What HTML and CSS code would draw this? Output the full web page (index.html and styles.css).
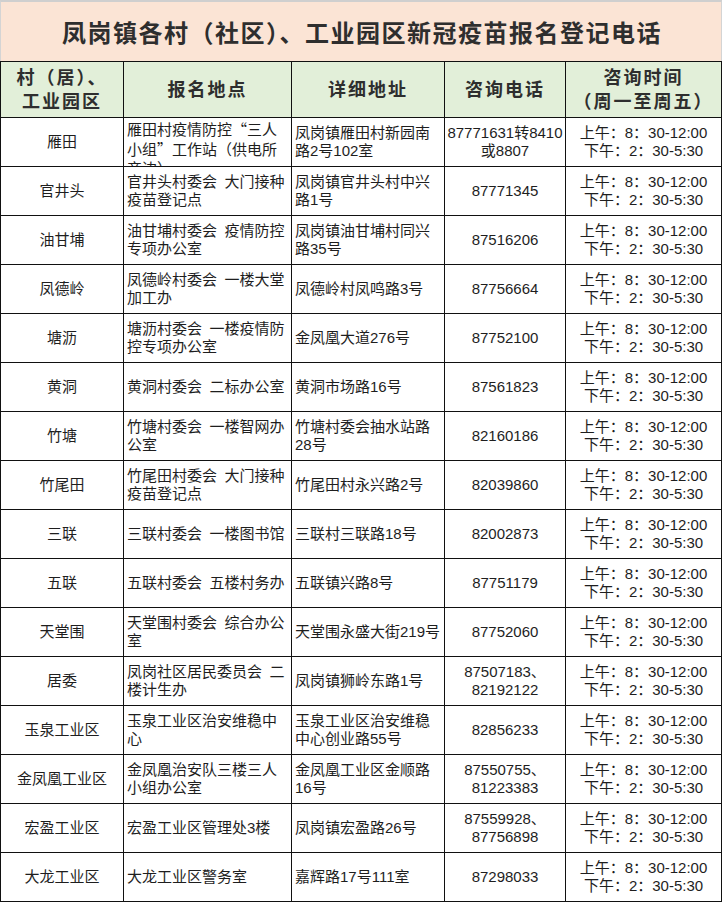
FILE: index.html
```html
<!DOCTYPE html>
<html lang="zh-CN">
<head>
<meta charset="utf-8">
<title>凤岗镇各村（社区）、工业园区新冠疫苗报名登记电话</title>
<link rel="stylesheet" href="styles.css">
</head>
<body>
<div class="sheet">
  <div class="title">凤岗镇各村（社区）、工业园区新冠疫苗报名登记电话</div>
  <div class="grid">
    <div class="hd">村（居）、<br>工业园区</div>
    <div class="hd">报名地点</div>
    <div class="hd">详细地址</div>
    <div class="hd">咨询电话</div>
    <div class="hd">咨询时间<br>（周一至周五）</div>

    <div class="c name">雁田</div>
    <div class="c left top"><div class="txt">雁田村疫情防控<span class="q">“</span>三人<br>小组<span class="q">”</span>工作站（供电所<br>旁边）</div></div>
    <div class="c left">凤岗镇雁田村新园南<br>路2号102室</div>
    <div class="c mid">87771631转8410<br>或8807</div>
    <div class="c mid">上午：8：30-12:00<br>下午：2：30-5:30</div>

    <div class="c name">官井头</div>
    <div class="c left">官井头村委会&ensp;大门接种<br>疫苗登记点</div>
    <div class="c left">凤岗镇官井头村中兴<br>路1号</div>
    <div class="c mid">87771345</div>
    <div class="c mid">上午：8：30-12:00<br>下午：2：30-5:30</div>

    <div class="c name">油甘埔</div>
    <div class="c left">油甘埔村委会&ensp;疫情防控<br>专项办公室</div>
    <div class="c left">凤岗镇油甘埔村同兴<br>路35号</div>
    <div class="c mid">87516206</div>
    <div class="c mid">上午：8：30-12:00<br>下午：2：30-5:30</div>

    <div class="c name">凤德岭</div>
    <div class="c left">凤德岭村委会&ensp;一楼大堂<br>加工办</div>
    <div class="c left">凤德岭村凤鸣路3号</div>
    <div class="c mid">87756664</div>
    <div class="c mid">上午：8：30-12:00<br>下午：2：30-5:30</div>

    <div class="c name">塘沥</div>
    <div class="c left">塘沥村委会&ensp;一楼疫情防<br>控专项办公室</div>
    <div class="c left">金凤凰大道276号</div>
    <div class="c mid">87752100</div>
    <div class="c mid">上午：8：30-12:00<br>下午：2：30-5:30</div>

    <div class="c name">黄洞</div>
    <div class="c left">黄洞村委会&ensp;二标办公室</div>
    <div class="c left">黄洞市场路16号</div>
    <div class="c mid">87561823</div>
    <div class="c mid">上午：8：30-12:00<br>下午：2：30-5:30</div>

    <div class="c name">竹塘</div>
    <div class="c left">竹塘村委会&ensp;一楼智网办<br>公室</div>
    <div class="c left">竹塘村委会抽水站路<br>28号</div>
    <div class="c mid">82160186</div>
    <div class="c mid">上午：8：30-12:00<br>下午：2：30-5:30</div>

    <div class="c name">竹尾田</div>
    <div class="c left">竹尾田村委会&ensp;大门接种<br>疫苗登记点</div>
    <div class="c left">竹尾田村永兴路2号</div>
    <div class="c mid">82039860</div>
    <div class="c mid">上午：8：30-12:00<br>下午：2：30-5:30</div>

    <div class="c name">三联</div>
    <div class="c left">三联村委会&ensp;一楼图书馆</div>
    <div class="c left">三联村三联路18号</div>
    <div class="c mid">82002873</div>
    <div class="c mid">上午：8：30-12:00<br>下午：2：30-5:30</div>

    <div class="c name">五联</div>
    <div class="c left">五联村委会&ensp;五楼村务办</div>
    <div class="c left">五联镇兴路8号</div>
    <div class="c mid">87751179</div>
    <div class="c mid">上午：8：30-12:00<br>下午：2：30-5:30</div>

    <div class="c name">天堂围</div>
    <div class="c left">天堂围村委会&ensp;综合办公<br>室</div>
    <div class="c left">天堂围永盛大街219号</div>
    <div class="c mid">87752060</div>
    <div class="c mid">上午：8：30-12:00<br>下午：2：30-5:30</div>

    <div class="c name">居委</div>
    <div class="c left">凤岗社区居民委员会&ensp;二<br>楼计生办</div>
    <div class="c left">凤岗镇狮岭东路1号</div>
    <div class="c mid">87507183、<br>82192122</div>
    <div class="c mid">上午：8：30-12:00<br>下午：2：30-5:30</div>

    <div class="c name">玉泉工业区</div>
    <div class="c left">玉泉工业区治安维稳中<br>心</div>
    <div class="c left">玉泉工业区治安维稳<br>中心创业路55号</div>
    <div class="c mid">82856233</div>
    <div class="c mid">上午：8：30-12:00<br>下午：2：30-5:30</div>

    <div class="c name">金凤凰工业区</div>
    <div class="c left">金凤凰治安队三楼三人<br>小组办公室</div>
    <div class="c left">金凤凰工业区金顺路<br>16号</div>
    <div class="c mid">87550755、<br>81223383</div>
    <div class="c mid">上午：8：30-12:00<br>下午：2：30-5:30</div>

    <div class="c name">宏盈工业区</div>
    <div class="c left">宏盈工业区管理处3楼</div>
    <div class="c left">凤岗镇宏盈路26号</div>
    <div class="c mid">87559928、<br>87756898</div>
    <div class="c mid">上午：8：30-12:00<br>下午：2：30-5:30</div>

    <div class="c name">大龙工业区</div>
    <div class="c left">大龙工业区警务室</div>
    <div class="c left">嘉辉路17号111室</div>
    <div class="c mid">87298033</div>
    <div class="c mid">上午：8：30-12:00<br>下午：2：30-5:30</div>
  </div>
</div>
</body>
</html>
```

FILE: styles.css
```css
html, body {
  margin: 0;
  padding: 0;
  background: #ffffff;
}

body {
  font-family: "Liberation Sans", "Noto Sans CJK SC", sans-serif;
  color: #1e1e1e;
}

.sheet {
  width: 722px;
}

.title {
  box-sizing: border-box;
  height: 61px;
  border-top: 2px solid #cfcfcf;
  border-left: 1px solid #d4d4d4;
  border-right: 1px solid #d4d4d4;
  background: #fbe4d5;
  display: flex;
  align-items: center;
  justify-content: center;
  font-size: 24px;
  letter-spacing: 1.5px;
  font-weight: bold;
  color: #2e2e2e;
  padding-left: 2px;
}

.grid {
  box-sizing: border-box;
  width: 722px;
  display: grid;
  grid-template-columns: 122px 167px 152px 120px 155px;
  grid-template-rows: 55px repeat(16, 48px);
  gap: 1px;
  padding: 1px;
  background: #111111;
}

.hd {
  background: #e2efd9;
  display: flex;
  align-items: center;
  justify-content: center;
  text-align: center;
  font-size: 18px;
  line-height: 24px;
  letter-spacing: 2px;
  font-weight: bold;
  color: #2e2e2e;
}

.c {
  background: #ffffff;
  display: flex;
  align-items: center;
  overflow: hidden;
  white-space: nowrap;
  font-size: 15px;
  line-height: 18px;
}

.name {
  justify-content: center;
  text-align: center;
}

.left {
  padding-left: 3px;
}

.mid {
  justify-content: center;
  text-align: center;
}

.top {
  align-items: flex-start;
  padding-top: 1px;
  line-height: 19px;
}

.q {
  font-family: "Noto Sans CJK SC", sans-serif;
}
```
